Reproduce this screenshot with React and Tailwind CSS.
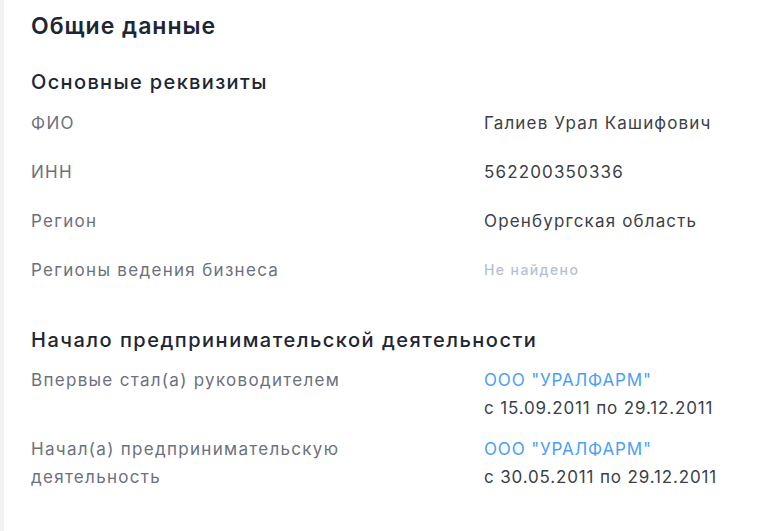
import React from "react";

const rows = [
  ["ФИО", "Галиев Урал Кашифович"],
  ["ИНН", "562200350336"],
  ["Регион", "Оренбургская область"],
];

export default function App() {
  return (
    <div className="w-[760px] h-[531px] flex bg-white overflow-hidden" style={{ fontFamily: "Inter, 'Noto Sans', sans-serif" }}>
      <div className="w-[4px] bg-[#f2f3f5] shrink-0" />
      <div className="flex-1 pl-[27px] pt-[10px]">
        <h1 className="text-[23px] leading-[32px] font-semibold tracking-[1px] text-[#1e2533]">Общие данные</h1>
        <h2 className="mt-[26px] text-[20px] leading-[28px] font-medium tracking-[1.35px] text-[#1e2533]">Основные реквизиты</h2>
        <div className="mt-[15px] flex flex-col gap-[25px]">
          {rows.map(([l, v]) => (
            <div key={l} className="flex text-[17px] leading-[24px]">
              <div className="w-[453px] shrink-0 tracking-[1.3px] text-[#6c717d]">{l}</div>
              <div className="tracking-[1.15px] text-[#3b3f48]">{v}</div>
            </div>
          ))}
          <div className="flex text-[17px] leading-[24px]">
            <div className="w-[453px] shrink-0 tracking-[1.3px] text-[#6c717d]">Регионы ведения бизнеса</div>
            <div className="text-[14px] font-medium tracking-[1.4px] text-[#b6bfd0]">Не найдено</div>
          </div>
        </div>
        <h2 className="mt-[44px] text-[20px] leading-[28px] font-medium tracking-[1.5px] text-[#1e2533]">Начало предпринимательской деятельности</h2>
        <div className="mt-[12px] flex flex-col gap-[13px] text-[17px] leading-[28px]">
          <div className="flex">
            <div className="w-[453px] shrink-0 pr-[100px] tracking-[1.3px] text-[#6c717d]">Впервые стал(а) руководителем</div>
            <div className="tracking-[0.85px]">
              <div className="text-[#4a9ff5]">ООО "УРАЛФАРМ"</div>
              <div className="text-[#3b3f48]">с 15.09.2011 по 29.12.2011</div>
            </div>
          </div>
          <div className="flex">
            <div className="w-[453px] shrink-0 pr-[100px] tracking-[1.3px] text-[#6c717d]">Начал(а) предпринимательскую деятельность</div>
            <div className="tracking-[0.85px]">
              <div className="text-[#4a9ff5]">ООО "УРАЛФАРМ"</div>
              <div className="text-[#3b3f48]">с 30.05.2011 по 29.12.2011</div>
            </div>
          </div>
        </div>
      </div>
    </div>
  );
}
